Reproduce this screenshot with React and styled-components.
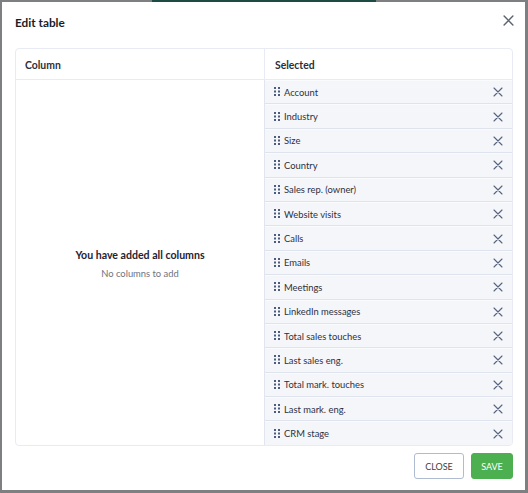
import React from 'react';
import styled, { createGlobalStyle } from 'styled-components';

const GlobalStyle = createGlobalStyle`
  html, body {
    margin: 0;
    padding: 0;
  }
  body {
    font-family: Lato, "Open Sans", Arial, sans-serif;
    color: #1f2330;
    background: #7d7f80;
  }
`;

const Backdrop = styled.div`
  width: 528px;
  height: 493px;
  box-sizing: border-box;
  padding: 2px 3px 3px 2px;
  background: linear-gradient(to right, transparent 152px, #1d4a42 152px, #1d4a42 376px, transparent 376px) top / 100% 2px no-repeat, #7d7f80;
`;

const Modal = styled.div`
  height: 100%;
  box-sizing: border-box;
  background: #fff;
  display: flex;
  flex-direction: column;
  padding: 0 12px 11px 13px;
`;

const TitleBar = styled.div`
  display: flex;
  align-items: center;
  justify-content: space-between;
  height: 40px;
`;

const Title = styled.h2`
  margin: 0;
  font-size: 11.8px;
  font-weight: 700;
  color: #1a1d26;
`;

const IconButton = styled.button`
  border: none;
  background: none;
  padding: 0;
  margin-right: -1px;
  margin-top: ${p => (p.top ? '-4px' : '0')};
  display: flex;
  color: ${p => p.color || '#5b6270'};
  cursor: pointer;
`;

const Table = styled.div`
  margin-top: 6px;
  flex: 1;
  display: grid;
  grid-template-columns: 248px 1fr;
  grid-template-rows: 31px 1fr;
  border: 1px solid #e8ebf3;
  border-radius: 4px;
  overflow: hidden;
`;

const HeadCell = styled.div`
  display: flex;
  align-items: center;
  padding: 2px 0 0 ${p => (p.right ? '10px' : '9px')};
  font-size: 10.4px;
  font-weight: 700;
  color: #2b2f3a;
  border-bottom: 1px solid #e8ebf3;
  border-left: ${p => (p.right ? '1px solid #e8ebf3' : 'none')};
`;

const Empty = styled.div`
  display: flex;
  flex-direction: column;
  align-items: center;
  justify-content: center;
  gap: 7px;
  padding-top: 2px;
`;

const EmptyTitle = styled.div`
  font-size: 10.6px;
  font-weight: 700;
  color: #1f2330;
`;

const EmptyText = styled.div`
  font-size: 9.4px;
  color: #6e7380;
`;

const List = styled.div`
  display: flex;
  flex-direction: column;
  border-left: 1px solid #e1e5ef;
`;

const Row = styled.div`
  height: 24.4px;
  flex-shrink: 0;
  box-sizing: border-box;
  display: flex;
  align-items: center;
  padding: 0 10px 0 9px;
  background: #f5f6fa;
  border-bottom: 1px solid #dfe3ee;
  border-top: 1px solid #fafbfd;
  font-size: 9.4px;
  color: #2d3140;
`;

const Label = styled.span`
  flex: 1;
  margin-left: 4px;
`;

const Footer = styled.div`
  display: flex;
  justify-content: flex-end;
  gap: 7px;
  padding-top: 7px;
`;

const Button = styled.button`
  height: 26px;
  box-sizing: border-box;
  padding: 0;
  width: ${p => (p.primary ? '42px' : '50px')};
  border-radius: 3px;
  font-family: inherit;
  font-size: 9px;
  border: 1px solid ${p => (p.primary ? '#4caf50' : '#aebbd0')};
  background: ${p => (p.primary ? '#4caf50' : '#fff')};
  color: ${p => (p.primary ? '#fff' : '#3a3f4b')};
  cursor: pointer;
`;

const DragHandle = () => (
  <svg width="6" height="10" viewBox="0 0 6 10" fill="#4d5b7c">
    {[0, 1, 2].map(r => (
      <React.Fragment key={r}>
        <rect x="0" y={r * 3.5} width="2" height="2" />
        <rect x="4" y={r * 3.5} width="2" height="2" />
      </React.Fragment>
    ))}
  </svg>
);

const Cross = ({ size = 10, width = 1.1 }) => (
  <svg width={size} height={size} viewBox="0 0 10 10" stroke="currentColor" strokeWidth={width} strokeLinecap="round">
    <path d="M1 1 L9 9 M9 1 L1 9" />
  </svg>
);

const columns = [
  'Account',
  'Industry',
  'Size',
  'Country',
  'Sales rep. (owner)',
  'Website visits',
  'Calls',
  'Emails',
  'Meetings',
  'LinkedIn messages',
  'Total sales touches',
  'Last sales eng.',
  'Total mark. touches',
  'Last mark. eng.',
  'CRM stage',
];

export default function App() {
  return (
    <Backdrop>
      <GlobalStyle />
      <Modal>
        <TitleBar>
          <Title>Edit table</Title>
          <IconButton top aria-label="Close">
            <Cross size={11} width={1.3} />
          </IconButton>
        </TitleBar>
        <Table>
          <HeadCell>Column</HeadCell>
          <HeadCell right>Selected</HeadCell>
          <Empty>
            <EmptyTitle>You have added all columns</EmptyTitle>
            <EmptyText>No columns to add</EmptyText>
          </Empty>
          <List>
            {columns.map(c => (
              <Row key={c}>
                <DragHandle />
                <Label>{c}</Label>
                <IconButton color="#56647f" aria-label={`Remove ${c}`}>
                  <Cross />
                </IconButton>
              </Row>
            ))}
          </List>
        </Table>
        <Footer>
          <Button>CLOSE</Button>
          <Button primary>SAVE</Button>
        </Footer>
      </Modal>
    </Backdrop>
  );
}
